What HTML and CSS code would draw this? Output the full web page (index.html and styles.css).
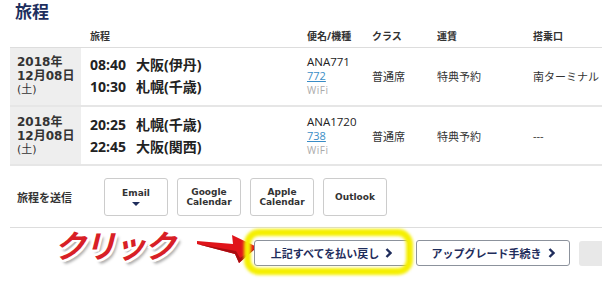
FILE: index.html
```html
<!DOCTYPE html>
<html lang="ja">
<head>
    <meta charset="UTF-8">
    <meta name="viewport" content="width=device-width, initial-scale=1.0">
    <title>旅程</title>
    <link rel="stylesheet" href="styles.css">
</head>
<body>
    <div class="page">
        <h2 class="page-title">旅程</h2>

        <table class="itinerary">
            <colgroup>
                <col class="col-date">
                <col class="col-route">
                <col class="col-flight">
                <col class="col-class">
                <col class="col-fare">
                <col class="col-gate">
            </colgroup>
            <thead>
                <tr>
                    <th></th>
                    <th class="route-head">旅程</th>
                    <th>便名/機種</th>
                    <th>クラス</th>
                    <th>運賃</th>
                    <th>搭乗口</th>
                </tr>
            </thead>
            <tbody>
                <tr>
                    <td class="date-cell">
                        <div class="date-line">2018年</div>
                        <div class="date-line">12月08日</div>
                        <div class="date-day">(土)</div>
                    </td>
                    <td class="route-cell">
                        <div class="leg"><span class="time">08:40</span>大阪(伊丹)</div>
                        <div class="leg"><span class="time">10:30</span>札幌(千歳)</div>
                    </td>
                    <td class="flight-cell">
                        <div class="flight-no">ANA771</div>
                        <a href="#" class="aircraft">772</a>
                        <div class="wifi">WiFi</div>
                    </td>
                    <td>普通席</td>
                    <td>特典予約</td>
                    <td>南ターミナル</td>
                </tr>
                <tr>
                    <td class="date-cell">
                        <div class="date-line">2018年</div>
                        <div class="date-line">12月08日</div>
                        <div class="date-day">(土)</div>
                    </td>
                    <td class="route-cell">
                        <div class="leg"><span class="time">20:25</span>札幌(千歳)</div>
                        <div class="leg"><span class="time">22:45</span>大阪(関西)</div>
                    </td>
                    <td class="flight-cell">
                        <div class="flight-no">ANA1720</div>
                        <a href="#" class="aircraft">738</a>
                        <div class="wifi">WiFi</div>
                    </td>
                    <td>普通席</td>
                    <td>特典予約</td>
                    <td class="gate-none">---</td>
                </tr>
            </tbody>
        </table>

        <div class="send-row">
            <span class="send-label">旅程を送信</span>
            <button class="send-button">Email<span class="caret"></span></button>
            <button class="send-button">Google<br>Calendar</button>
            <button class="send-button">Apple<br>Calendar</button>
            <button class="send-button">Outlook</button>
        </div>

        <div class="action-row">
            <span class="click-note">クリック</span>
            <svg class="click-arrow" width="62" height="30" viewBox="0 0 62 30">
                <path d="M1 7 L37 10 L36 1 L61 13 L43 29 L39 20 L1 10 Z" fill="#e0141a"/>
                <path d="M1 10 L39 20 L43 29 L61 13 L44 24 L40 17 Z" fill="#a80c10"/>
            </svg>
            <button class="action-button highlighted">上記すべてを払い戻し
                <svg class="chevron" width="7" height="10" viewBox="0 0 7 10"><path d="M1.5 1 L5.5 5 L1.5 9" fill="none" stroke="#1f2d5c" stroke-width="2.4"/></svg>
            </button>
            <button class="action-button">アップグレード手続き
                <svg class="chevron" width="7" height="10" viewBox="0 0 7 10"><path d="M1.5 1 L5.5 5 L1.5 9" fill="none" stroke="#1f2d5c" stroke-width="2.4"/></svg>
            </button>
            <span class="action-more"></span>
        </div>
    </div>
</body>
</html>
```

FILE: styles.css
```css
* {
    margin: 0;
    padding: 0;
    box-sizing: border-box;
}

body {
    background: #ffffff;
    color: #333333;
    font-family: 'Open Sans', 'Noto Sans CJK JP', sans-serif;
    width: 602px;
    height: 287px;
    overflow: hidden;
}

.page {
    padding-left: 10px;
}

.page-title {
    height: 27px;
    padding: 0 0 0 5px;
    font-size: 17px;
    line-height: 24px;
    font-weight: bold;
    color: #1d2f5e;
}

.itinerary {
    width: 592px;
    border-collapse: collapse;
    table-layout: fixed;
}

.col-date { width: 71px; }
.col-route { width: 219px; }
.col-flight { width: 65px; }
.col-class { width: 65px; }
.col-fare { width: 96px; }
.col-gate { width: 76px; }

.itinerary th {
    height: 20px;
    padding: 0 0 3px 7px;
    text-align: left;
    font-size: 10px;
    font-weight: bold;
    color: #333;
    border-bottom: 1px solid #dddddd;
}

.itinerary th.route-head {
    padding-left: 9px;
}

.itinerary td {
    height: 59px;
    padding: 0 0 0 7px;
    font-size: 11px;
    color: #333;
    border-bottom: 2px solid #e6e6e6;
    vertical-align: middle;
}

.itinerary td.date-cell {
    background: #eeeeee;
    padding-left: 7px;
    font-family: 'DejaVu Sans', 'Noto Sans CJK JP', sans-serif;
}

.date-line {
    font-size: 12px;
    line-height: 14px;
    font-weight: bold;
    color: #333;
}

.date-day {
    font-size: 11px;
    line-height: 14px;
}

.itinerary td.route-cell {
    padding-left: 9px;
    font-size: 14px;
    font-weight: bold;
    line-height: 22px;
    color: #222;
}

.time {
    display: inline-block;
    width: 46px;
}

.flight-cell {
    line-height: 14px;
}

.flight-no {
    font-size: 11.5px;
    color: #222;
}

.aircraft {
    color: #3a8dc6;
    text-decoration: underline;
}

.wifi {
    color: #aaaaaa;
    font-size: 10px;
    letter-spacing: 0.5px;
}

.gate-none {
    color: #555;
}

.send-row {
    display: flex;
    align-items: center;
    gap: 9px;
    height: 62px;
    padding-top: 1px;
    border-bottom: 1px solid #dddddd;
}

.send-label {
    width: 85px;
    padding-left: 7px;
    font-size: 11px;
    font-weight: bold;
    color: #333;
}

.send-button {
    display: flex;
    flex-direction: column;
    align-items: center;
    justify-content: center;
    width: 64px;
    height: 38px;
    background: #fff;
    border: 1px solid #cccccc;
    border-radius: 3px;
    font-family: 'DejaVu Sans', sans-serif;
    font-size: 9px;
    font-weight: bold;
    line-height: 10.5px;
    color: #333;
}

.caret {
    margin-top: 4px;
    border-left: 4px solid transparent;
    border-right: 4px solid transparent;
    border-top: 4px solid #1f2d5c;
}

.action-row {
    display: flex;
    align-items: flex-start;
    height: 59px;
}

.click-note {
    margin-left: 44px;
    width: 126px;
    font-size: 32px;
    line-height: 36px;
    font-weight: bold;
    font-style: italic;
    color: #d81f26;
    letter-spacing: -2px;
    text-shadow:
        2px 0 0 #fff, -2px 0 0 #fff, 0 2px 0 #fff, 0 -2px 0 #fff,
        2px 2px 0 #fff, -2px -2px 0 #fff, 2px -2px 0 #fff, -2px 2px 0 #fff,
        3px 4px 3px rgba(0, 0, 0, 0.35);
}

.click-arrow {
    margin: 6px 0 0 16px;
}

.action-button {
    position: relative;
    display: flex;
    align-items: center;
    justify-content: center;
    gap: 6px;
    margin-top: 12px;
    height: 26px;
    background: #fff;
    border: 1px solid #8c929c;
    border-radius: 3px;
    font-family: 'Noto Sans CJK JP', sans-serif;
    font-size: 11px;
    font-weight: bold;
    color: #1f2d5c;
}

.action-button.highlighted {
    width: 155px;
    margin-left: -4px;
}

.action-button.highlighted::before {
    content: '';
    position: absolute;
    top: -12px;
    left: -11px;
    right: -5px;
    bottom: -10px;
    border: 7px solid #f5ef00;
    border-radius: 15px;
    filter: blur(1.5px);
}

.action-button + .action-button {
    width: 154px;
    margin-left: 7px;
}

.action-more {
    flex: 1;
    margin: 13px 0 0 9px;
    height: 25px;
    background: #e8e8e8;
    border-radius: 3px 0 0 3px;
}
```
